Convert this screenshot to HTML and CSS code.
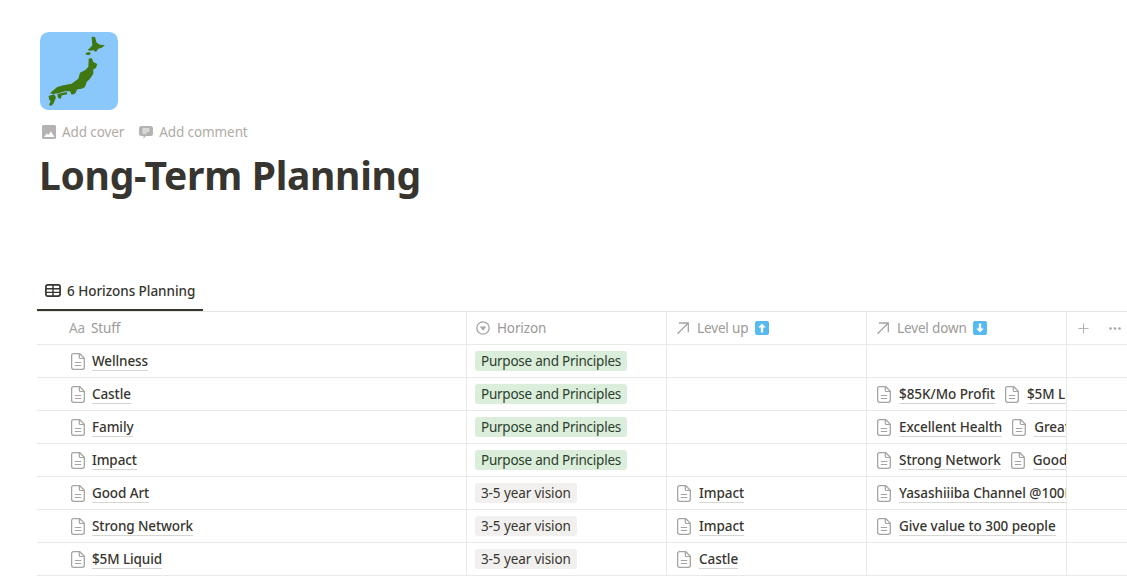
FILE: index.html
```html
<!DOCTYPE html>
<html lang="en">
<head>
<meta charset="utf-8">
<title>Long-Term Planning</title>
<link rel="stylesheet" href="styles.css">
</head>
<body>
<svg width="0" height="0" class="defs">
  <symbol id="doc" viewBox="0 0 14 17">
    <path d="M2.600 .7h6.200L13.300 5.300V14.300c0 1.100-.9 2-2 2H2.600c-1.100 0-2-.9-2-2V2.700c0-1.100.9-2 2-2z" fill="none" stroke="#a5a4a2" stroke-width="1.300"/>
    <path d="M8.300 .9v3.300c0 .8.500 1.300 1.300 1.300h3.500M3.800 9.500h6.400M3.800 12.500h6.400" fill="none" stroke="#a5a4a2" stroke-width="1.200"/>
  </symbol>
  <symbol id="arrow" viewBox="0 0 14 14">
    <path d="M1.500 12.800L12 2.300M3 2h9.300v9.300" fill="none" stroke="#a5a4a2" stroke-width="1.300"/>
  </symbol>
</svg>
<main class="page">
  <header class="head">
    <svg class="emoji" viewBox="0 0 234 234">
      <rect width="234" height="234" rx="26" fill="#8ac8fb"/>
      <path fill="#3f7712" d="M155 14L165 15L170 32L180 38L195 40L185 47L175 50L168 60L160 55L150 56L143 54L152 46L157 40Z"/>
      <path fill="#3f7712" d="M138 62L150 60L152 66L145 70L137 67Z"/>
      <path fill="#3f7712" d="M146 80L155 78L160 90L172 96L168 108L160 112L160 125L150 140L140 150L135 165L125 170L112 172L105 185L95 188L90 178L75 178L55 184L40 186L30 184L40 175L52 165L70 160L95 155L105 148L115 140L120 122L135 115L145 105Z"/>
      <path fill="#3f7712" d="M52 186L80 180L82 187L66 190L62 200L54 198Z"/>
      <path fill="#3f7712" d="M26 192L42 187L48 196L44 206L40 215L33 222L27 218L32 208L27 202Z"/>
    </svg>
    <div class="actions">
      <span class="action">
        <svg class="act-ico" viewBox="0 0 14 14"><path fill="#b4b3b1" d="M1.500 0h11A1.500 1.500 0 0 1 14 1.500v11a1.500 1.500 0 0 1-1.500 1.500h-11A1.500 1.500 0 0 1 0 12.500v-11A1.500 1.500 0 0 1 1.500 0z"/><path fill="#fff" d="M2 12l3-3.500 1.500 1.200L9 6.500l3.500 5.500z"/></svg>
        Add cover
      </span>
      <span class="action">
        <svg class="act-ico" viewBox="0 0 14 14"><path fill="#b4b3b1" d="M2.500 1h9A2.500 2.500 0 0 1 14 3.500v5a2.500 2.500 0 0 1-2.500 2.500H7l-2.500 2.500V11h-2A2.500 2.500 0 0 1 0 8.500v-5A2.500 2.500 0 0 1 2.500 1z"/><path stroke="#fff" stroke-width="1" d="M3.500 4h7M3.500 6h7M3.500 8h4"/></svg>
        Add comment
      </span>
    </div>
    <h1 class="title">Long-Term Planning</h1>
  </header>

  <nav class="tabs">
    <span class="tab">
      <svg class="tab-ico" viewBox="0 0 16 13"><rect x=".9" y=".9" width="14.200" height="11.200" rx="2" fill="none" stroke="#37352f" stroke-width="1.700"/><path d="M1 4.700h14M1 8.400h14M8 1v11" stroke="#37352f" stroke-width="1.400" fill="none"/></svg>
      6 Horizons Planning
    </span>
  </nav>

  <div class="table">
    <div class="row row-head">
      <div class="cell name"><span class="aa">Aa</span> Stuff</div>
      <div class="cell"><svg class="hd-ico" viewBox="0 0 14 14"><circle cx="7" cy="7" r="6.200" fill="none" stroke="#a5a4a2" stroke-width="1.300"/><path d="M3.800 5.500h6.400L7 9.800z" fill="#a5a4a2"/></svg>Horizon</div>
      <div class="cell"><svg class="hd-ico"><use href="#arrow"/></svg>Level up <svg class="kbd" viewBox="0 0 14 14"><rect width="14" height="14" rx="2" fill="#55b9f3"/><path d="M7 2.500L10.800 6.500H8.200V11.500H5.800V6.500H3.200Z" fill="#fff"/></svg></div>
      <div class="cell"><svg class="hd-ico"><use href="#arrow"/></svg>Level down <svg class="kbd" viewBox="0 0 14 14"><rect width="14" height="14" rx="2" fill="#55b9f3"/><path d="M7 11.500L10.800 7.500H8.200V2.500H5.800V7.500H3.200Z" fill="#fff"/></svg></div>
      <div class="cell tools">
        <svg class="plus" viewBox="0 0 12 12"><path d="M6 .5v11M.5 6h11" stroke="#b4b3b1" stroke-width="1.200" fill="none"/></svg>
        <svg class="dots" viewBox="0 0 12 3"><circle cx="1.500" cy="1.500" r="1.300" fill="#a5a4a2"/><circle cx="6" cy="1.500" r="1.300" fill="#a5a4a2"/><circle cx="10.500" cy="1.500" r="1.300" fill="#a5a4a2"/></svg>
      </div>
    </div>

    <div class="row">
      <div class="cell name"><a class="link"><svg class="doc"><use href="#doc"/></svg><span class="u">Wellness</span></a></div>
      <div class="cell tagged"><span class="tag green">Purpose and Principles</span></div>
      <div class="cell"></div>
      <div class="cell"></div>
      <div class="cell end"></div>
    </div>
    <div class="row">
      <div class="cell name"><a class="link"><svg class="doc"><use href="#doc"/></svg><span class="u">Castle</span></a></div>
      <div class="cell tagged"><span class="tag green">Purpose and Principles</span></div>
      <div class="cell"></div>
      <div class="cell"><a class="link"><svg class="doc"><use href="#doc"/></svg><span class="u">$85K/Mo Profit</span></a><a class="link"><svg class="doc"><use href="#doc"/></svg><span class="u">$5M Liquid</span></a></div>
      <div class="cell end"></div>
    </div>
    <div class="row">
      <div class="cell name"><a class="link"><svg class="doc"><use href="#doc"/></svg><span class="u">Family</span></a></div>
      <div class="cell tagged"><span class="tag green">Purpose and Principles</span></div>
      <div class="cell"></div>
      <div class="cell"><a class="link"><svg class="doc"><use href="#doc"/></svg><span class="u">Excellent Health</span></a><a class="link"><svg class="doc"><use href="#doc"/></svg><span class="u">Great Family</span></a></div>
      <div class="cell end"></div>
    </div>
    <div class="row">
      <div class="cell name"><a class="link"><svg class="doc"><use href="#doc"/></svg><span class="u">Impact</span></a></div>
      <div class="cell tagged"><span class="tag green">Purpose and Principles</span></div>
      <div class="cell"></div>
      <div class="cell"><a class="link"><svg class="doc"><use href="#doc"/></svg><span class="u">Strong Network</span></a><a class="link"><svg class="doc"><use href="#doc"/></svg><span class="u">Good Art</span></a></div>
      <div class="cell end"></div>
    </div>
    <div class="row">
      <div class="cell name"><a class="link"><svg class="doc"><use href="#doc"/></svg><span class="u">Good Art</span></a></div>
      <div class="cell tagged"><span class="tag gray">3-5 year vision</span></div>
      <div class="cell"><a class="link"><svg class="doc"><use href="#doc"/></svg><span class="u">Impact</span></a></div>
      <div class="cell"><a class="link"><svg class="doc"><use href="#doc"/></svg><span class="u">Yasashiiiba Channel @100K</span></a></div>
      <div class="cell end"></div>
    </div>
    <div class="row">
      <div class="cell name"><a class="link"><svg class="doc"><use href="#doc"/></svg><span class="u">Strong Network</span></a></div>
      <div class="cell tagged"><span class="tag gray">3-5 year vision</span></div>
      <div class="cell"><a class="link"><svg class="doc"><use href="#doc"/></svg><span class="u">Impact</span></a></div>
      <div class="cell"><a class="link"><svg class="doc"><use href="#doc"/></svg><span class="u">Give value to 300 people</span></a></div>
      <div class="cell end"></div>
    </div>
    <div class="row">
      <div class="cell name"><a class="link"><svg class="doc"><use href="#doc"/></svg><span class="u">$5M Liquid</span></a></div>
      <div class="cell tagged"><span class="tag gray">3-5 year vision</span></div>
      <div class="cell"><a class="link"><svg class="doc"><use href="#doc"/></svg><span class="u">Castle</span></a></div>
      <div class="cell"></div>
      <div class="cell end"></div>
    </div>
  </div>
</main>
</body>
</html>
```
FILE: styles.css
```css
html, body {
  margin: 0;
  height: 100%;
  overflow: hidden;
  background: #fff;
}
body {
  font-family: "Noto Sans", "Open Sans", sans-serif;
  font-size: 14px;
  color: #37352f;
}
.defs { display: block; height: 0; }
.page { padding: 32px 0 0 37px; }
.head { padding-left: 3px; height: 246px; }
.emoji { display: block; width: 78px; height: 78px; }
.actions {
  display: flex;
  gap: 15px;
  margin-top: 13px;
  margin-left: 2px;
  height: 18px;
  align-items: center;
  color: #b0aba5;
  font-size: 13.500px;
  letter-spacing: -.1px;
}
.action { display: flex; align-items: center; gap: 6px; }
.act-ico { width: 14px; height: 14px; }
.title {
  margin: 8px 0 0 -1px;
  font-size: 39px;
  line-height: 52px;
  font-weight: 700;
  letter-spacing: -.3px;
  color: #37352f;
}
.tabs { display: flex; height: 33px; }
.tab {
  display: flex;
  align-items: center;
  gap: 6px;
  width: 158px;
  padding: 0 0 6px 8px;
  box-sizing: content-box;
  height: 25px;
  border-bottom: 2px solid #37352f;
  font-size: 13.500px;
  font-weight: 500;
  letter-spacing: -.05px;
}
.tab-ico { width: 16px; height: 13px; }
.table {
  width: 1090px;
  border-top: 1px solid #e6e6e5;
}
.row {
  display: grid;
  grid-template-columns: 430px 200px 200px 200px 60px;
  border-bottom: 1px solid #e9e9e7;
  box-sizing: content-box;
  height: 32px;
}
.cell {
  display: flex;
  align-items: center;
  gap: 10px;
  padding-left: 10px;
  overflow: hidden;
  white-space: nowrap;
  border-right: 1px solid #e9e9e7;
  box-sizing: border-box;
}
.cell.tagged { padding-left: 8px; }
.row-head .cell { color: #9b9a97; font-size: 13.500px; letter-spacing: -.13px; gap: 7px; padding-left: 9px; }
.row-head .cell.name { padding-left: 32px; gap: 6px; }
.cell.name { padding-left: 34px; }
.cell.end { border-right: 0; }
.row-head .cell.tools { border-right: 0; gap: 20px; padding-left: 11px; }
.aa { font-size: 13.500px; color: #a5a4a2; }
.hd-ico { width: 14px; height: 14px; flex: none; }
.kbd { width: 14px; height: 14px; flex: none; margin-left: -1px; }
.plus { width: 11px; height: 11px; flex: none; }
.dots { width: 12px; height: 3px; flex: none; }
.link {
  display: inline-flex;
  align-items: center;
  gap: 8px;
  flex: none;
  color: #37352f;
  font-weight: 500;
  font-size: 13.500px;
  letter-spacing: -.05px;
  position: relative;
  top: 1px;
}
.cell.name .link { gap: 7px; letter-spacing: -.1px; }
.doc { width: 14px; height: 17px; flex: none; margin-top: -2px; }
.u { border-bottom: 1px solid #d6d6d3; line-height: 17px; }
.tag {
  display: inline-block;
  height: 20px;
  line-height: 20px;
  padding: 0 6px;
  border-radius: 3px;
  font-size: 13.500px;
  letter-spacing: -.1px;
}
.green { background: #dbeddb; color: #2c3f2c; letter-spacing: -.24px; }
.gray { background: #f1f0ef; color: #37352f; }
```
